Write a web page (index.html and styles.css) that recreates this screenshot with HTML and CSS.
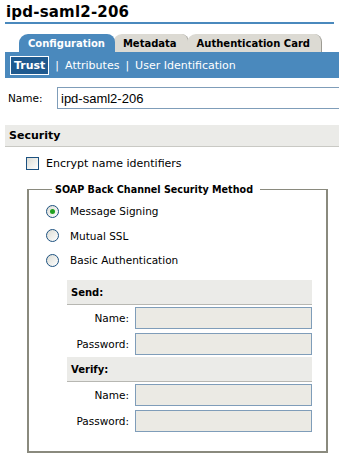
FILE: index.html
```html
<!DOCTYPE html>
<html lang="en">

<head>
    <meta charset="UTF-8">
    <title>ipd-saml2-206</title>
    <link rel="stylesheet" href="styles.css">
</head>

<body>
    <div class="page">
        <h1 class="title">ipd-saml2-206</h1>

        <div class="tabs">
            <span class="tab active">Configuration</span>
            <span class="tab">Metadata</span>
            <span class="tab">Authentication Card</span>
        </div>
        <nav class="subnav">
            <span class="current">Trust</span>
            <span class="sep">|</span>
            <span>Attributes</span>
            <span class="sep">|</span>
            <span>User Identification</span>
        </nav>

        <div class="name-row">
            <label>Name:</label>
            <input type="text" value="ipd-saml2-206">
        </div>

        <div class="section-head">Security</div>

        <div class="check-row">
            <span class="checkbox"></span>
            <span>Encrypt name identifiers</span>
        </div>

        <fieldset class="soap">
            <legend>SOAP Back Channel Security Method</legend>

            <div class="radio-row"><span class="radio checked"></span><span>Message Signing</span></div>
            <div class="radio-row"><span class="radio"></span><span>Mutual SSL</span></div>
            <div class="radio-row"><span class="radio"></span><span>Basic Authentication</span></div>

            <div class="creds">
                <div class="creds-head">Send:</div>
                <div class="field"><label>Name:</label><input type="text" disabled></div>
                <div class="field"><label>Password:</label><input type="password" disabled></div>
                <div class="creds-head">Verify:</div>
                <div class="field"><label>Name:</label><input type="text" disabled></div>
                <div class="field"><label>Password:</label><input type="password" disabled></div>
            </div>
        </fieldset>
    </div>
</body>

</html>
```

FILE: styles.css
```css
* {
    box-sizing: border-box;
    margin: 0;
    padding: 0;
}

body {
    background: #fff;
    font-family: "DejaVu Sans", Verdana, sans-serif;
    font-size: 10.5px;
    color: #000;
    overflow: hidden;
}

.page {
    padding: 0 0 0 5px;
}

.title {
    font-size: 15px;
    font-weight: bold;
    letter-spacing: 0.2px;
    height: 24px;
    padding: 3px 0 0 1px;
    border-bottom: 2px solid #4a89bd;
    margin-right: 5px;
}

.tabs {
    display: flex;
    margin-top: 10px;
    padding-left: 14px;
    height: 18px;
    align-items: flex-end;
}

.tab {
    position: relative;
    height: 18px;
    line-height: 19px;
    padding: 0 11px 0 10px;
    background: #dcdad3;
    border-radius: 9px 8px 0 0;
    border-right: 1px solid #9d9b93;
    font-weight: bold;
    font-size: 10px;
    margin-left: -2px;
}

.tab.active {
    background: #4a89bd;
    color: #fff;
    border-right: none;
    z-index: 1;
    margin-left: 0;
    padding: 0 10px 0 9px;
}

.subnav {
    display: flex;
    align-items: center;
    background: #4a89bd;
    height: 26px;
    padding-left: 5px;
    color: #fff;
    font-size: 11px;
    gap: 6px;
}

.subnav .current {
    font-weight: bold;
    background: #1f5a8f;
    border: 1px solid #fff;
    padding: 2px 3px 2px 3px;
}

.name-row {
    display: flex;
    align-items: center;
    margin-top: 9px;
    height: 22px;
}

.name-row label {
    width: 52px;
    padding-left: 3px;
}

.name-row input {
    flex: 1;
    height: 22px;
    border: 1px solid #7f9db9;
    border-right: none;
    font-family: "Liberation Sans", Arial, sans-serif;
    font-size: 13px;
    padding-left: 3px;
}

.section-head {
    margin-top: 16px;
    background: #ebebe8;
    border-bottom: 1px solid #c9c9c4;
    height: 22px;
    line-height: 21px;
    padding-left: 4px;
    font-weight: bold;
    font-size: 11px;
}

.check-row {
    display: flex;
    align-items: center;
    gap: 7px;
    margin: 9px 0 0 21px;
    height: 14px;
    font-size: 11px;
}

.checkbox {
    width: 13px;
    height: 13px;
    border: 1px solid #1c5180;
    background: linear-gradient(135deg, #dcdcd4, #fff);
}

.soap {
    margin: 14px 12px 0 22px;
    border: 2px solid #8a8a7e;
    border-top: 1px solid #8a8a7e;
    padding: 4px 14px 17px 17px;
}

.soap legend {
    font-weight: bold;
    font-size: 9.6px;
    padding: 0 7px 0 3px;
    margin-left: 6px;
}

.radio-row {
    display: flex;
    align-items: center;
    gap: 11px;
    height: 24.5px;
}

.radio {
    width: 13px;
    height: 13px;
    border-radius: 50%;
    border: 1px solid #1c5180;
    background: linear-gradient(135deg, #dcdcd4, #fff);
    position: relative;
}

.radio.checked::after {
    content: "";
    position: absolute;
    left: 3px;
    top: 3px;
    width: 5px;
    height: 5px;
    border-radius: 50%;
    background: #21a121;
}

.creds {
    margin: 7px 0 0 21px;
}

.creds-head {
    background: #ebebe8;
    border-bottom: 1px solid #b7b7b2;
    height: 25px;
    line-height: 25px;
    padding-left: 4px;
    font-weight: bold;
    font-size: 10px;
}

.field {
    display: flex;
    align-items: center;
    height: 26px;
}

.field label {
    width: 68px;
    text-align: right;
    padding-right: 6px;
}

.field input {
    width: 177px;
    height: 22px;
    border: 1px solid #7f9db9;
    background: #ebeae4;
}
```
